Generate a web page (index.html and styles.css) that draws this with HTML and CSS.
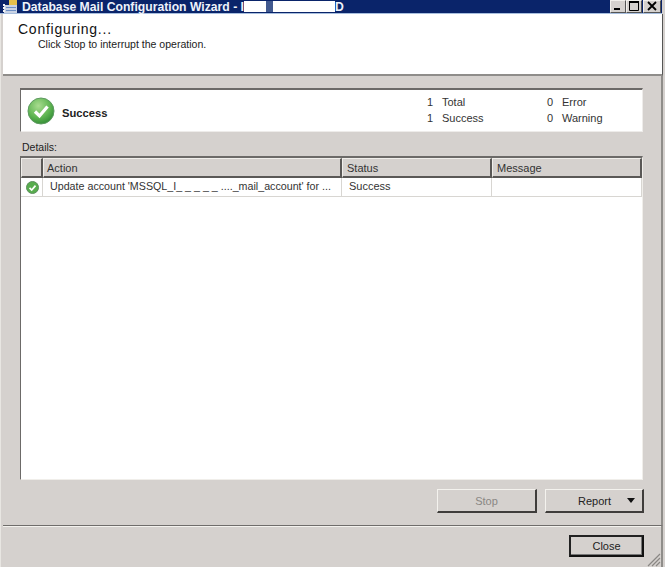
FILE: index.html
```html
<!DOCTYPE html>
<html>
<head>
<meta charset="utf-8">
<title>Database Mail Configuration Wizard</title>
<link rel="stylesheet" href="styles.css">
</head>
<body>
<div class="window">
  <div class="titlebar">
    <svg class="app-icon" width="20" height="13" viewBox="0 0 20 13">
      <rect x="4" y="5" width="13" height="8" fill="#c9d3e4"/>
      <path d="M9 0h8v5H9z" fill="#e5c04a"/>
      <path d="M3 4h2v2H3zM3 7h2v2H3zM3 10h2v2H3z" fill="#f4f4f4"/>
      <path d="M6 7h10v1H6zM6 10h10v1H6z" fill="#6d8fc4"/>
    </svg>
    <span class="title-text">Database Mail Configuration Wizard - I</span><span class="redact r1"></span><span class="redact-dark"></span><span class="redact r2"></span><span class="title-text">D</span>
    <div class="win-buttons">
      <div class="win-btn"><svg width="15" height="13" viewBox="0 0 15 13"><rect x="3" y="8" width="6" height="2" fill="#000"/></svg></div>
      <div class="win-btn"><svg width="15" height="13" viewBox="0 0 15 13"><path d="M2.5 1.5h9v9h-9z" fill="none" stroke="#000"/><rect x="2" y="1" width="10" height="2" fill="#000"/></svg></div>
      <div class="win-btn gap"><svg width="15" height="13" viewBox="0 0 15 13"><path d="M3 2l8 8M11 2l-8 8" stroke="#000" stroke-width="1.8"/></svg></div>
    </div>
  </div>
  <div class="header">
    <div class="heading">Configuring...</div>
    <div class="subheading">Click Stop to interrupt the operation.</div>
  </div>
  <div class="content">
    <div class="summary">
      <svg class="big-check" width="28" height="28" viewBox="0 0 28 28">
        <defs>
          <radialGradient id="g1" cx="40%" cy="30%" r="75%"><stop offset="0" stop-color="#a9dc8f"/><stop offset="0.6" stop-color="#5fb552"/><stop offset="1" stop-color="#2f8a33"/></radialGradient>
        </defs>
        <circle cx="14" cy="14" r="13" fill="url(#g1)" stroke="#5d9a60"/>
        <path d="M8 14.5l4.5 4.5L20.5 9.5" fill="none" stroke="#fff" stroke-width="3.2"/>
      </svg>
      <div class="summary-label">Success</div>
      <div class="counts c1">
        <div class="count-row"><span class="num">1</span><span>Total</span></div>
        <div class="count-row"><span class="num">1</span><span>Success</span></div>
      </div>
      <div class="counts c2">
        <div class="count-row"><span class="num">0</span><span>Error</span></div>
        <div class="count-row"><span class="num">0</span><span>Warning</span></div>
      </div>
    </div>
    <div class="details-label">Details:</div>
    <div class="grid">
      <div class="grid-head">
        <div class="th col-icon"></div>
        <div class="th col-action">Action</div>
        <div class="th col-status">Status</div>
        <div class="th col-message">Message</div>
      </div>
      <div class="grid-row">
        <div class="td col-icon">
          <svg width="13" height="13" viewBox="0 0 13 13"><circle cx="6.5" cy="6.5" r="6" fill="#58ad4e" stroke="#5d8f5e"/><path d="M3.5 6.8l2.2 2.2 3.8-4.4" fill="none" stroke="#fff" stroke-width="1.7"/></svg>
        </div>
        <div class="td col-action action-text">Update account 'MSSQL_I_ _ _ _ _ ...._mail_account' for ...</div>
        <div class="td col-status">Success</div>
        <div class="td col-message"></div>
      </div>
    </div>
    <div class="actions">
      <button class="btn stop" disabled>Stop</button>
      <button class="btn report"><span class="report-label">Report</span><span class="arrow"></span></button>
    </div>
  </div>
  <div class="footer">
    <button class="btn close">Close</button>
    <svg class="grip" width="14" height="14" viewBox="0 0 14 14"><path d="M13 1L1 13M13 5L5 13M13 9l-4 4" stroke="#8a8784" stroke-width="1.2"/></svg>
  </div>
</div>
</body>
</html>
```

FILE: styles.css
```css
* { box-sizing: border-box; }
html, body { margin: 0; padding: 0; background: #d5d1ce; }
body { width: 665px; height: 567px; overflow: hidden; font-family: "Liberation Sans", Arial, sans-serif; font-size: 11px; color: #222; }
.window { width: 665px; height: 567px; display: flex; flex-direction: column; padding: 0 3px 0 2px; background: #d5d1ce; border-left: 1px solid #e8e6e2; position: relative; }
.titlebar { height: 14px; margin: 0 0 0 -3px; display: flex; align-items: center; background: #0a246a; border-bottom: 1px solid #a7bede; color: #fff; font-weight: bold; font-size: 12.2px; white-space: nowrap; }
.app-icon { flex: none; width: 20px; margin-right: 2px; }
.title-text { color: #eef2fa; }
.redact { display: inline-block; height: 11px; background: #fff; }
.r1 { width: 22px; }
.redact-dark { display: inline-block; width: 7px; height: 11px; background: #41598f; }
.r2 { width: 62px; }
.win-buttons { margin-left: auto; display: flex; height: 13px; margin-top: -1px; }
.win-btn { width: 16px; height: 13px; background: #d5d1ce; border: 1px solid; border-color: #f2f0ec #555 #555 #f2f0ec; display: flex; align-items: center; justify-content: center; overflow: hidden; }
.win-btn svg { flex: none; }
.win-btn.gap { width: 18px; margin-left: 1px; margin-right: 1px; }
.header { height: 62px; background: #fff; border-right: 1px solid #555; padding: 8px 0 0 15px; border-bottom: 2px solid #8f8d8a; margin-right: -1px; flex: none; }
.heading { font-size: 14px; line-height: 14px; color: #111; letter-spacing: 0.75px; }
.subheading { margin: 2px 0 0 20px; line-height: 13px; font-size: 10.55px; color: #222; }
.content { flex: 1; border-right: 2px solid #8f8d8a; padding: 12px 16px 0 17px; display: flex; flex-direction: column; margin-right: -1px; }
.summary { height: 44px; flex: none; display: flex; align-items: center; background: #fff; border: 1px solid; border-color: #6c6a68 #eeecea #eeecea #6c6a68; border-top-width: 2px; width: 623px; padding-left: 6px; }
.big-check { flex: none; }
.summary-label { font-weight: bold; font-size: 11.2px; margin: 4px 0 0 7px; width: 365px; color: #222; }
.counts { flex: none; display: flex; flex-direction: column; gap: 3px; margin-top: -1px; color: #333; }
.c1 { width: 120px; }
.count-row { display: flex; line-height: 13px; }
.num { width: 15px; }
.details-label { margin: 8px 0 0 2px; height: 16px; line-height: 15px; font-size: 10.5px; color: #222; }
.grid { height: 324px; flex: none; width: 623px; background: #fff; border: 1px solid; border-color: #6c6a68 #f0eeea #f0eeea #6c6a68; border-top-width: 2px; }
.grid-head { display: flex; height: 20px; background: #d5d1ce; }
.th { border: 1px solid; border-color: #f0eeea #5a5856 #5a5856 #f0eeea; border-width: 1px 2px 2px 1px; padding: 2px 0 0 4px; font-size: 11px; line-height: 14px; color: #333; }
.th.col-action { padding-left: 3px; }
.grid-row { display: flex; height: 19px; }
.td { border-right: 1px solid #d8d6d2; border-bottom: 1px solid #d8d6d2; padding-left: 7px; font-size: 11px; line-height: 17px; white-space: nowrap; overflow: hidden; color: #333; }
.action-text { font-size: 10.7px; padding-left: 7px; }
.col-icon { width: 22px; flex: none; }
.td.col-icon { padding: 3px 0 0 5px; }
.td.col-icon svg { display: block; }
.col-action { width: 299px; flex: none; }
.col-status { width: 150px; flex: none; }
.col-message { flex: 1; }
.actions { display: flex; justify-content: flex-end; gap: 8px; margin: 9px 0 0; flex: none; padding-right: 1px; }
.btn { font-family: inherit; font-size: 11px; background: #d5d1ce; border: 1px solid; border-color: #f4f2ee #3f3d3b #3f3d3b #f4f2ee; border-width: 1px 2px 2px 1px; color: #222; padding: 0; }
.stop { width: 100px; height: 24px; color: #8a8784; }
.report { width: 99px; height: 24px; display: flex; align-items: center; padding-left: 32px; }
.report-label { flex: none; }
.arrow { margin-left: 16px; width: 0; height: 0; border-style: solid; border-width: 5px 4.5px 0; border-color: #111 transparent transparent; }
.footer { height: 42px; flex: none; margin-right: -1px; border-top: 1px solid #6f6d6b; box-shadow: inset 0 1px 0 #f4f2ee; border-right: 2px solid #8f8d8a; padding: 9px 17px 0 0; display: flex; justify-content: flex-end; align-items: flex-start; position: relative; }
.close { width: 75px; height: 22px; border: 2px solid; border-color: #222 #111 #111 #222; box-shadow: inset -1px -1px 0 #777; }
.grip { position: absolute; right: 0; bottom: 0; }
```
